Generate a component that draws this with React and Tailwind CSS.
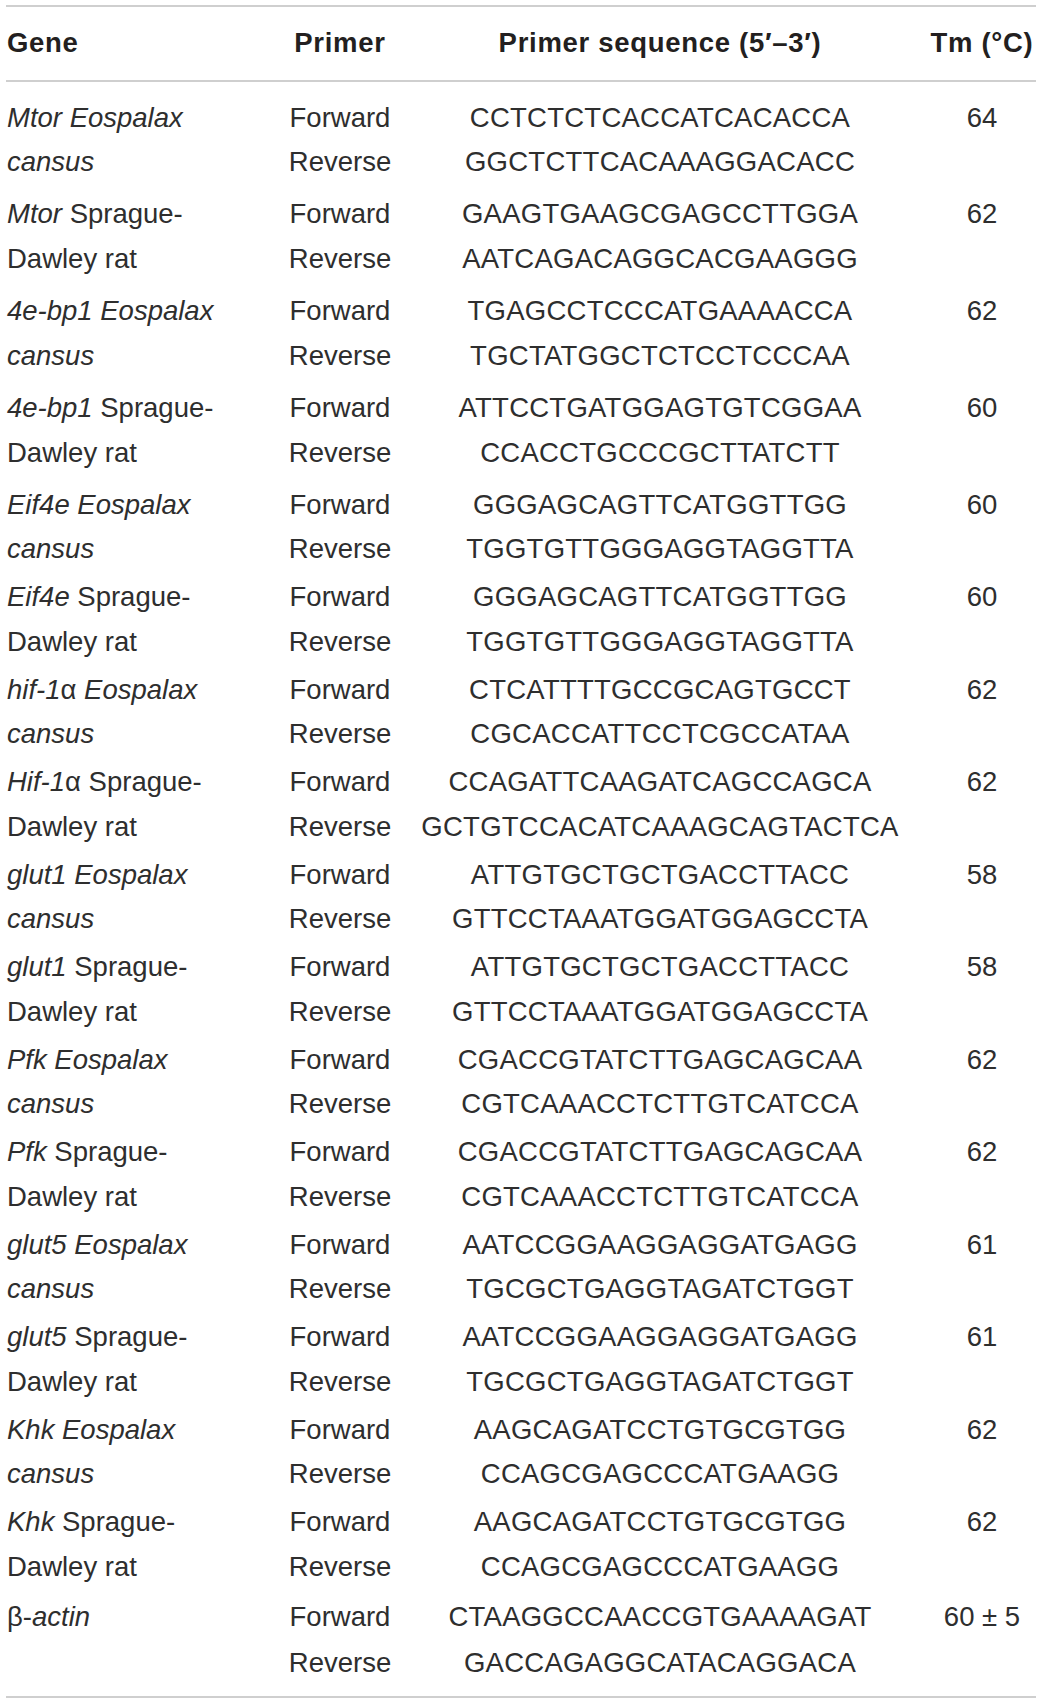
import React from "react";

const rows = [
  { gene: [<i>Mtor Eospalax</i>, <i>cansus</i>], f: "CCTCTCTCACCATCACACCA", r: "GGCTCTTCACAAAGGACACC", tm: "64" },
  { gene: [<><i>Mtor</i> Sprague-</>, "Dawley rat"], f: "GAAGTGAAGCGAGCCTTGGA", r: "AATCAGACAGGCACGAAGGG", tm: "62" },
  { gene: [<i>4e-bp1 Eospalax</i>, <i>cansus</i>], f: "TGAGCCTCCCATGAAAACCA", r: "TGCTATGGCTCTCCTCCCAA", tm: "62" },
  { gene: [<><i>4e-bp1</i> Sprague-</>, "Dawley rat"], f: "ATTCCTGATGGAGTGTCGGAA", r: "CCACCTGCCCGCTTATCTT", tm: "60" },
  { gene: [<i>Eif4e Eospalax</i>, <i>cansus</i>], f: "GGGAGCAGTTCATGGTTGG", r: "TGGTGTTGGGAGGTAGGTTA", tm: "60" },
  { gene: [<><i>Eif4e</i> Sprague-</>, "Dawley rat"], f: "GGGAGCAGTTCATGGTTGG", r: "TGGTGTTGGGAGGTAGGTTA", tm: "60" },
  { gene: [<><i>hif-1</i>α <i>Eospalax</i></>, <i>cansus</i>], f: "CTCATTTTGCCGCAGTGCCT", r: "CGCACCATTCCTCGCCATAA", tm: "62" },
  { gene: [<><i>Hif-1</i>α Sprague-</>, "Dawley rat"], f: "CCAGATTCAAGATCAGCCAGCA", r: "GCTGTCCACATCAAAGCAGTACTCA", tm: "62" },
  { gene: [<i>glut1 Eospalax</i>, <i>cansus</i>], f: "ATTGTGCTGCTGACCTTACC", r: "GTTCCTAAATGGATGGAGCCTA", tm: "58" },
  { gene: [<><i>glut1</i> Sprague-</>, "Dawley rat"], f: "ATTGTGCTGCTGACCTTACC", r: "GTTCCTAAATGGATGGAGCCTA", tm: "58" },
  { gene: [<i>Pfk Eospalax</i>, <i>cansus</i>], f: "CGACCGTATCTTGAGCAGCAA", r: "CGTCAAACCTCTTGTCATCCA", tm: "62" },
  { gene: [<><i>Pfk</i> Sprague-</>, "Dawley rat"], f: "CGACCGTATCTTGAGCAGCAA", r: "CGTCAAACCTCTTGTCATCCA", tm: "62" },
  { gene: [<i>glut5 Eospalax</i>, <i>cansus</i>], f: "AATCCGGAAGGAGGATGAGG", r: "TGCGCTGAGGTAGATCTGGT", tm: "61" },
  { gene: [<><i>glut5</i> Sprague-</>, "Dawley rat"], f: "AATCCGGAAGGAGGATGAGG", r: "TGCGCTGAGGTAGATCTGGT", tm: "61" },
  { gene: [<i>Khk Eospalax</i>, <i>cansus</i>], f: "AAGCAGATCCTGTGCGTGG", r: "CCAGCGAGCCCATGAAGG", tm: "62" },
  { gene: [<><i>Khk</i> Sprague-</>, "Dawley rat"], f: "AAGCAGATCCTGTGCGTGG", r: "CCAGCGAGCCCATGAAGG", tm: "62" },
  { gene: [<>β-<i>actin</i></>, ""], f: "CTAAGGCCAACCGTGAAAAGAT", r: "GACCAGAGGCATACAGGACA", tm: "60 ± 5", last: true },
];

function Group({ row, idx }) {
  const height = row.last ? "h-[104px]" : idx < 4 ? "h-[96.8px]" : "h-[92.5px]";
  const line = row.last ? "h-[44.6px] first:h-[47.9px]" : "h-[44.6px]";
  return (
    <div className={`grid grid-cols-[264px_140px_500px_126px] ${height}`}>
      <div className="flex flex-col pl-[1px]">
        <div className={`${line} flex items-center whitespace-nowrap`}><span>{row.gene[0]}</span></div>
        <div className={`${line} flex items-center whitespace-nowrap`}><span>{row.gene[1]}</span></div>
      </div>
      <div className="flex flex-col items-center">
        <div className={`${line} flex items-center`}>Forward</div>
        <div className={`${line} flex items-center`}>Reverse</div>
      </div>
      <div className="flex flex-col items-center tracking-[0.25px]">
        <div className={`${line} flex items-center`}>{row.f}</div>
        <div className={`${line} flex items-center`}>{row.r}</div>
      </div>
      <div className="flex flex-col items-center pl-[18px]">
        <div className={`${line} flex items-center whitespace-nowrap`}>{row.tm}</div>
      </div>
    </div>
  );
}

export default function App() {
  return (
    <div className="w-[1042px] h-[1705px] bg-white pt-[5px] px-[6px] font-['Liberation_Sans',Arial,sans-serif] text-[27.5px] text-[#2e2e2e]">
      <div className="h-[2px] bg-[#cfcfcf]" />
      <div className="grid grid-cols-[264px_140px_500px_126px] h-[73px] pb-[2px] items-center font-bold text-[#231f20] tracking-[0.7px]">
        <div className="pl-[1px]">Gene</div>
        <div className="text-center">Primer</div>
        <div className="text-center">Primer sequence (5′–3′)</div>
        <div className="text-center pl-[18px] whitespace-nowrap">Tm (°C)</div>
      </div>
      <div className="h-[2px] bg-[#cfcfcf]" />
      <div className="pt-[13px]">
        {rows.map((row, i) => (
          <Group key={i} row={row} idx={i} />
        ))}
      </div>
      <div className="h-[2px] bg-[#cfcfcf]" />
    </div>
  );
}
